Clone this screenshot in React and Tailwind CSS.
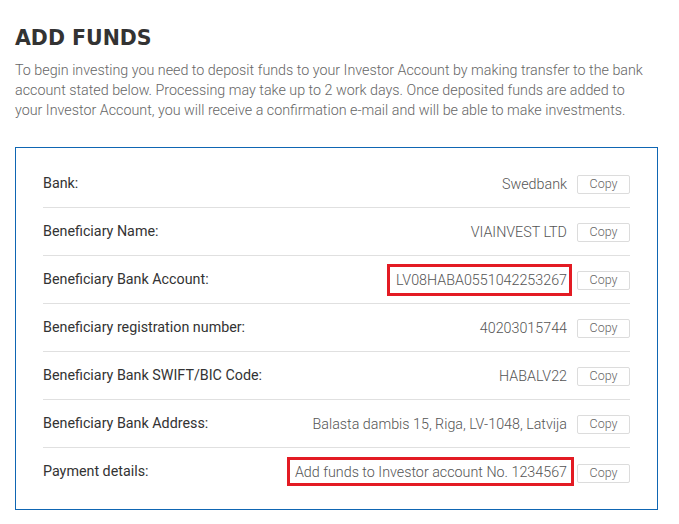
import React from "react";

const rows = [
  { label: "Bank:", value: "Swedbank" },
  { label: "Beneficiary Name:", value: "VIAINVEST LTD" },
  {
    label: "Beneficiary Bank Account:",
    value: "LV08HABA0551042253267",
    mark: "-left-[9px] -right-[5px] -top-[6px] -bottom-[6px]",
  },
  { label: "Beneficiary registration number:", value: "40203015744" },
  { label: "Beneficiary Bank SWIFT/BIC Code:", value: "HABALV22" },
  { label: "Beneficiary Bank Address:", value: "Balasta dambis 15, Riga, LV-1048, Latvija" },
  {
    label: "Payment details:",
    value: "Add funds to Investor account No. 1234567",
    mark: "-left-[8px] -right-[7px] -top-[5px] -bottom-[4px]",
  },
];

const App = () => {
  return (
    <div className="min-h-screen bg-white pl-[15px] pr-[21px] font-['Roboto',sans-serif]">
      <h1 className="pt-[24px] text-[20.5px] leading-[28px] font-bold text-[#333] font-['DejaVu_Sans',sans-serif]">
        ADD FUNDS
      </h1>
      <p className="mt-[8px] mr-[13px] text-[14.3px] leading-[20px] font-light text-[#666]">
        To begin investing you need to deposit funds to your Investor Account by
        making transfer to the bank account stated below. Processing may take up
        to 2 work days. Once deposited funds are added to your Investor Account,
        you will receive a confirmation e-mail and will be able to make
        investments.
      </p>

      <div className="mt-[27px] border border-[#0f66b3] px-[27px] pt-[12px] pb-[13px]">
        {rows.map((row, idx) => (
          <div
            key={idx}
            className={
              "flex h-12 items-center justify-between " +
              (idx < rows.length - 1 ? "border-b border-[#e0e0e0]" : "")
            }
          >
            <span className="text-[14.3px] font-normal text-[#333]">{row.label}</span>
            <div className="flex items-center">
              <span className="relative text-[14.3px] leading-5 font-light text-[#555]">
                {row.value}
                {row.mark && (
                  <span className={"absolute border-[3px] border-[#e31b23] " + row.mark} />
                )}
              </span>
              <button className="ml-[10px] mt-[2px] flex h-[19px] w-[53px] items-center justify-center rounded-[2px] border border-[#dcdcdc] bg-white text-[12.5px] font-light text-[#666]">
                Copy
              </button>
            </div>
          </div>
        ))}
      </div>
    </div>
  );
};

export default App;
